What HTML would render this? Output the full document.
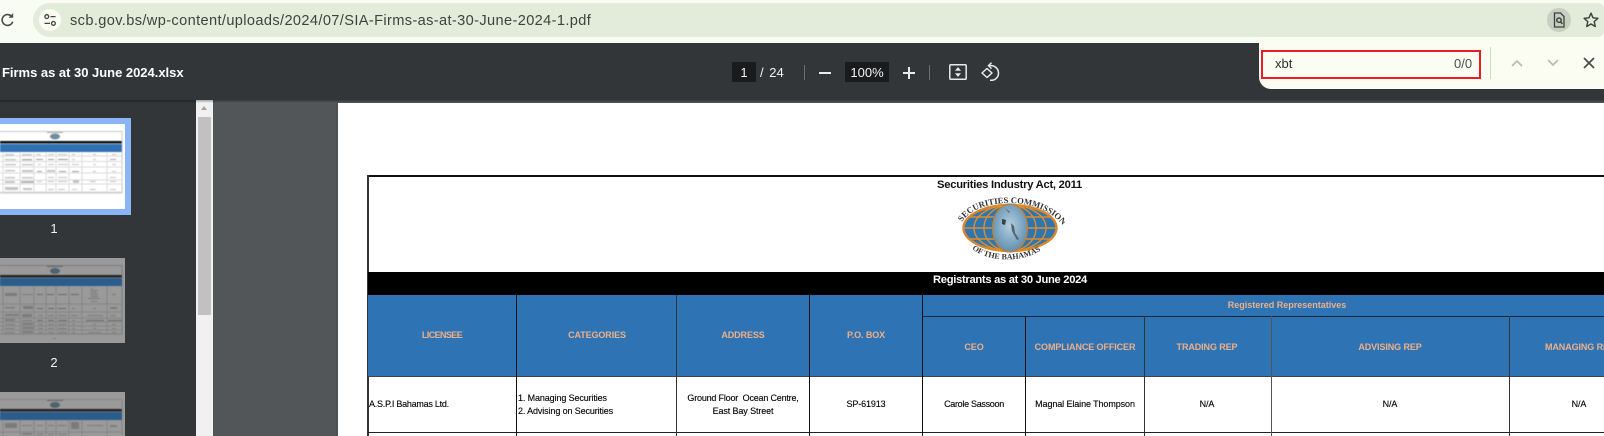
<!DOCTYPE html>
<html><head><meta charset="utf-8"><title>SIA Firms</title>
<style>
*{box-sizing:border-box}
html,body{margin:0;padding:0}
body{width:1604px;height:436px;position:relative;overflow:hidden;background:#525659;font-family:"Liberation Sans",sans-serif}
.a{position:absolute}
.t{position:absolute;white-space:nowrap}
.c{transform:translateX(-50%)}
.p{font-weight:400;color:#000;font-size:9px;line-height:11px;letter-spacing:-.12px;filter:blur(.2px);-webkit-text-stroke:.12px #000}
.h{font-weight:700;color:#eeaf87;font-size:9px;line-height:11px;letter-spacing:-.1px;filter:blur(.2px)}
.v{position:absolute;width:1px;background:#111}
</style></head><body>
<!-- top chrome -->
<div class="a" style="left:0;top:0;width:1604px;height:43px;background:#f9fcf2"></div>
<div class="a" style="left:33px;top:3px;width:1571px;height:34px;background:#e3ebdb;border-radius:17px 6px 6px 17px"></div>
<svg class="a" style="left:0;top:8px" width="20" height="24" viewBox="0 0 20 24"><path d="M11.4 8.2A5.4 5.4 0 1 0 12.7 13.6" fill="none" stroke="#474c47" stroke-width="1.6"/><path d="M13.2 5V9.8H8.6Z" fill="#474c47"/></svg>
<div class="a" style="left:39px;top:9px;width:22px;height:22px;border-radius:50%;background:#fafcf4"></div>
<svg class="a" style="left:39px;top:9px" width="22" height="22" viewBox="0 0 22 22" fill="none" stroke="#3f443f" stroke-width="1.3"><circle cx="7.8" cy="7.6" r="1.9"/><path d="M11.5 7.6H16.5M5.5 14.4H11"/><circle cx="14.4" cy="14.4" r="1.9"/></svg>
<div class="t" id="url" style="left:70px;top:12px;font-size:14.6px;line-height:18px;color:#3d443d;letter-spacing:.37px">scb.gov.bs/wp-content/uploads/2024/07/SIA-Firms-as-at-30-June-2024-1.pdf</div>
<div class="a" style="left:1547px;top:8px;width:24px;height:24px;border-radius:50%;background:#c8cfc2"></div>
<svg class="a" style="left:1547px;top:8px" width="24" height="24" viewBox="0 0 24 24" fill="none" stroke="#3b403b" stroke-width="1.3"><path d="M7.5 5H13.5L17 8.5V19H7.5Z"/><circle cx="12" cy="12.2" r="2.2" stroke-width="1.5"/><path d="M13.7 14L15.4 15.8" stroke-width="1.5"/></svg>
<svg class="a" style="left:1582px;top:11px" width="18" height="18" viewBox="0 0 18 18"><path d="M9 2.2L11 6.8L15.9 7.3L12.2 10.6L13.3 15.5L9 13L4.7 15.5L5.8 10.6L2.1 7.3L7 6.8Z" fill="none" stroke="#3b403b" stroke-width="1.4" stroke-linejoin="round"/></svg>

<!-- pdf toolbar -->
<div class="a" style="left:0;top:43px;width:1604px;height:57px;background:#323639"></div>
<div class="t" id="fn" style="left:2px;top:65px;font-size:13px;line-height:16px;font-weight:700;color:#fff;letter-spacing:-.02px">Firms as at 30 June 2024.xlsx</div>
<div class="a" style="left:732px;top:62px;width:24px;height:20px;background:#191b1c"></div>
<div class="t c" style="left:744px;top:65px;font-size:13px;line-height:16px;color:#f1f3f4">1</div>
<div class="t" style="left:760px;top:65px;font-size:13px;line-height:16px;color:#f1f3f4;word-spacing:2px">/ 24</div>
<div class="a" style="left:804px;top:65px;width:1px;height:15px;background:#6a6e71"></div>
<div class="a" style="left:819px;top:72px;width:12px;height:2px;background:#e8eaed"></div>
<div class="a" style="left:845px;top:62px;width:44px;height:20px;background:#191b1c"></div>
<div class="t c" style="left:867px;top:65px;font-size:13px;line-height:16px;color:#f1f3f4">100%</div>
<div class="a" style="left:903px;top:72px;width:12px;height:2px;background:#e8eaed"></div>
<div class="a" style="left:908px;top:67px;width:2px;height:12px;background:#e8eaed"></div>
<div class="a" style="left:929px;top:65px;width:1px;height:15px;background:#6a6e71"></div>
<svg class="a" style="left:947px;top:62px" width="22" height="20" viewBox="0 0 22 20" fill="none" stroke="#e8eaed" stroke-width="1.5"><rect x="2.8" y="2.8" width="16.4" height="14.4" rx="1"/><path d="M8 8.8L11 5L14 8.8Z M8 11.2L11 15L14 11.2Z" fill="#e8eaed" stroke="none"/></svg>
<svg class="a" style="left:979px;top:61px" width="23" height="22" viewBox="0 0 23 22" fill="none" stroke="#e8eaed" stroke-width="1.5"><path d="M8 7.5L3 12L8 16.5L13 12Z" stroke-linejoin="round"/><path d="M10 4.6C15.5 4 19.5 7.5 19.5 12C19.5 16.5 15.8 19.8 11 19.2"/><path d="M12.5 1.6L9.5 4.6L12.5 7.6"/></svg>

<!-- sidebar -->
<div class="a" style="left:0;top:100px;width:196px;height:336px;background:#323639"></div>
<div class="a" style="left:196px;top:100px;width:17px;height:336px;background:#f1f1f1"></div>
<div class="a" style="left:198px;top:117px;width:13px;height:198px;background:#c1c1c1"></div>
<div class="a" style="left:201px;top:106px;width:0;height:0;border-left:3.5px solid transparent;border-right:3.5px solid transparent;border-bottom:4px solid #a3a3a3"></div>
<div class="a" style="left:0;top:118px;width:131px;height:97px;background:#8ab4f8"></div>

<svg class="a" style="left:0;top:124px" width="125" height="85" viewBox="0 0 125 85">
<defs><filter id="b" x="-5%" y="-5%" width="110%" height="110%"><feGaussianBlur stdDeviation=".6"/></filter></defs>
<rect width="125" height="85" fill="#fff"/>
<g filter="url(#b)">
<path d="M0 7.5H122V69H0" fill="none" stroke="#c8c8c8"/>
<ellipse cx="55" cy="12.5" rx="5" ry="3" fill="#6f8d9e"/><rect x="47" y="8" width="16" height="1" fill="#aaa"/>
<rect x="0" y="17" width="122" height="2.5" fill="#111"/>
<rect x="0" y="20" width="122" height="8" fill="#2e72b4"/>
<path d="M3 28V69M20 28V69M34 28V69M46 28V69M56 28V69M69 28V69M82 28V69M107 28V69" stroke="#dcdcdc" fill="none"/>
<path d="M0 33H122M0 38.5H122M0 44H122M0 50H122M0 57H122M0 61H122M0 69H122" stroke="#dcdcdc" fill="none" transform="translate(0 -1)"/>
<g fill="#b0b0b0" opacity=".75"><rect x="5" y="30" width="9" height="1.4"/><rect x="22" y="30" width="10" height="1.4"/><rect x="36" y="30" width="5" height="1"/><rect x="48" y="30" width="6" height="1"/><rect x="58" y="30" width="9" height="1"/><rect x="72" y="30" width="3" height="1"/><rect x="93" y="30" width="3" height="1"/><rect x="112" y="30" width="4" height="1"/>
<rect x="5" y="35" width="11" height="1.4"/><rect x="22" y="35" width="10" height="1.4" fill="#888"/><rect x="36" y="35" width="7" height="1" fill="#777"/><rect x="48" y="35" width="6" height="1" fill="#777"/><rect x="58" y="35" width="10" height="1" fill="#777"/><rect x="72" y="35" width="3" height="1"/><rect x="93" y="35" width="3" height="1"/><rect x="110" y="35" width="6" height="1" fill="#888"/>
<rect x="5" y="40" width="11" height="1.4"/><rect x="22" y="40" width="11" height="1.4"/><rect x="38" y="40" width="3" height="1"/><rect x="48" y="40" width="6" height="1"/><rect x="58" y="40" width="10" height="1"/><rect x="72" y="40" width="7" height="1"/><rect x="93" y="40" width="3" height="1"/><rect x="112" y="40" width="4" height="1"/>
<rect x="5" y="46" width="10" height="1.4"/><rect x="22" y="46" width="11" height="2"/><rect x="37" y="47" width="5" height="1" fill="#777"/><rect x="47" y="46" width="8" height="2"/><rect x="59" y="47" width="7" height="1" fill="#777"/><rect x="72" y="47" width="7" height="1" fill="#777"/><rect x="93" y="47" width="3" height="1"/><rect x="112" y="47" width="4" height="1"/>
<rect x="5" y="53" width="10" height="1.4"/><rect x="22" y="53" width="11" height="1.4"/><rect x="48" y="53" width="6" height="1"/><rect x="58" y="53" width="9" height="1"/><rect x="110" y="53" width="6" height="1"/>
<rect x="5" y="57" width="10" height="2"/><rect x="21" y="57" width="13" height="2" fill="#999"/><rect x="37" y="57" width="5" height="1"/><rect x="48" y="57" width="6" height="1"/><rect x="58" y="57" width="9" height="1"/><rect x="73" y="56" width="6" height="3"/><rect x="90" y="57" width="6" height="1"/><rect x="110" y="57" width="6" height="1"/>
<rect x="5" y="63" width="13" height="3"/><rect x="23" y="64" width="9" height="2"/><rect x="48" y="65" width="6" height="1"/><rect x="58" y="65" width="7" height="1"/><rect x="72" y="65" width="5" height="1"/><rect x="90" y="65" width="6" height="1"/><rect x="110" y="65" width="6" height="1"/></g>
</g></svg>
<div class="t c" style="left:54px;top:221px;font-size:13px;line-height:16px;color:#f1f3f4">1</div>

<svg class="a" style="left:0;top:258px" width="125" height="85" viewBox="0 0 125 85">
<rect width="125" height="85" fill="#9a9a9a"/>
<g filter="url(#b)">
<path d="M0 7.5H122V76H0" fill="none" stroke="#7c7c7c"/>
<ellipse cx="55" cy="13" rx="5" ry="3" fill="#4f626e"/><rect x="47" y="8" width="16" height="1" fill="#666"/>
<rect x="0" y="17" width="122" height="2.5" fill="#222"/>
<rect x="0" y="20" width="122" height="8" fill="#2b5c8c"/>
<path d="M3 28V76M20 28V76M34 28V76M46 28V76M56 28V76M69 28V76M82 28V76M107 28V76" stroke="#858585" fill="none"/>
<path d="M0 46H122M0 54H122M0 60H122M0 64H122M0 68H122M0 72H122" stroke="#858585" fill="none"/>
<g fill="#6e6e6e" opacity=".7"><rect x="5" y="35" width="12" height="3"/><rect x="22" y="36" width="11" height="1"/><rect x="37" y="36" width="6" height="1" fill="#555"/><rect x="47" y="36" width="7" height="1" fill="#555"/><rect x="58" y="36" width="9" height="1" fill="#555"/><rect x="71" y="36" width="8" height="1" fill="#555"/><rect x="91" y="30" width="2" height="1"/><rect x="90" y="32" width="8" height="1"/><rect x="91" y="34" width="6" height="1"/><rect x="90" y="36" width="8" height="1"/><rect x="91" y="38" width="7" height="1"/><rect x="88" y="40" width="12" height="1"/><rect x="91" y="43" width="6" height="1"/><rect x="112" y="36" width="4" height="1"/>
<rect x="5" y="49" width="10" height="1.4"/><rect x="23" y="48" width="10" height="3"/><rect x="37" y="50" width="6" height="1" fill="#555"/><rect x="48" y="50" width="6" height="1" fill="#555"/><rect x="58" y="50" width="8" height="1" fill="#555"/><rect x="72" y="50" width="3" height="1"/><rect x="93" y="50" width="3" height="1"/><rect x="110" y="49" width="7" height="2"/>
<rect x="5" y="56" width="14" height="2"/><rect x="22" y="56" width="10" height="3"/><rect x="38" y="57" width="5" height="1"/><rect x="48" y="57" width="6" height="1"/><rect x="58" y="57" width="9" height="1"/><rect x="71" y="57" width="7" height="1"/><rect x="87" y="57" width="16" height="1"/><rect x="110" y="57" width="6" height="1"/>
<rect x="5" y="61" width="10" height="2"/><rect x="22" y="62" width="10" height="1"/><rect x="37" y="62" width="6" height="1" fill="#555"/><rect x="48" y="62" width="6" height="1" fill="#555"/><rect x="58" y="62" width="9" height="1" fill="#555"/><rect x="72" y="62" width="3" height="1"/><rect x="86" y="62" width="18" height="1" fill="#555"/><rect x="108" y="62" width="14" height="1" fill="#555"/>
<rect x="5" y="66" width="10" height="1"/><rect x="22" y="65" width="11" height="2"/><rect x="38" y="66" width="5" height="1"/><rect x="48" y="66" width="6" height="1"/><rect x="58" y="66" width="9" height="1"/><rect x="72" y="66" width="3" height="1"/><rect x="93" y="66" width="3" height="1"/><rect x="112" y="66" width="4" height="1"/>
<rect x="5" y="70" width="10" height="1"/><rect x="22" y="69" width="12" height="2"/><rect x="38" y="70" width="5" height="1"/><rect x="48" y="70" width="6" height="1"/><rect x="58" y="70" width="9" height="1"/><rect x="72" y="70" width="3" height="1"/><rect x="93" y="70" width="3" height="1"/><rect x="112" y="70" width="4" height="1"/>
<rect x="5" y="74" width="10" height="1"/><rect x="22" y="73" width="11" height="2"/><rect x="38" y="74" width="5" height="1"/><rect x="48" y="74" width="6" height="1"/><rect x="58" y="74" width="9" height="1"/><rect x="72" y="74" width="3" height="1"/><rect x="88" y="74" width="14" height="1"/><rect x="112" y="74" width="4" height="1"/><rect x="53" y="80" width="3" height="1"/></g>
</g></svg>
<div class="t c" style="left:54px;top:355px;font-size:13px;line-height:16px;color:#f1f3f4">2</div>

<svg class="a" style="left:0;top:392px" width="125" height="44" viewBox="0 0 125 44">
<rect width="125" height="44" fill="#9a9a9a"/>
<g filter="url(#b)">
<path d="M0 7.5H122V44M3 28V44M20 28V44M34 28V44M46 28V44M56 28V44M69 28V44M82 28V44M107 28V44" stroke="#858585" fill="none"/>
<ellipse cx="55" cy="13" rx="5" ry="3" fill="#4f626e"/><rect x="47" y="8" width="16" height="1" fill="#666"/>
<rect x="0" y="17" width="122" height="2.5" fill="#222"/>
<rect x="0" y="20" width="122" height="8" fill="#2b5c8c"/>
<path d="M0 40H122" stroke="#858585"/>
<g fill="#6e6e6e" opacity=".7"><rect x="5" y="31" width="12" height="5"/><rect x="22" y="33" width="10" height="1"/><rect x="37" y="33" width="6" height="1"/><rect x="48" y="33" width="6" height="1"/><rect x="58" y="33" width="9" height="1"/><rect x="71" y="30" width="8" height="7"/><rect x="87" y="33" width="16" height="1"/><rect x="110" y="33" width="7" height="2"/><rect x="22" y="41" width="10" height="2"/><rect x="37" y="42" width="6" height="1"/><rect x="48" y="42" width="6" height="1"/><rect x="58" y="42" width="9" height="1"/></g>
</g></svg>

<!-- top shadow under toolbar -->
<div class="a" style="left:0;top:100px;width:1604px;height:3px;background:linear-gradient(#00000055,#00000000);z-index:2"></div>

<!-- pdf page -->
<div class="a" style="left:338px;top:103px;width:1266px;height:333px;background:#fff"></div>
<div class="a" style="left:336px;top:103px;width:2px;height:333px;background:#4c5053"></div>

<!-- table -->
<div class="a" style="left:367px;top:175px;width:1237px;height:2px;background:#111"></div>
<div class="a" style="left:367px;top:175px;width:1.5px;height:261px;background:#333"></div>
<div class="a" style="left:368px;top:272px;width:1236px;height:23px;background:#000"></div>
<div class="a" style="left:368px;top:295px;width:1236px;height:81px;background:#2e74b5"></div>
<div class="a" style="left:922px;top:316px;width:682px;height:1px;background:#10243a"></div>
<div class="a" style="left:368px;top:376px;width:1236px;height:1px;background:#444"></div>
<div class="a" style="left:368px;top:432px;width:1236px;height:1px;background:#222"></div>
<div class="v" style="left:516px;top:295px;height:141px"></div>
<div class="v" style="left:676px;top:295px;height:141px;width:1px;background:#333"></div>
<div class="v" style="left:809px;top:295px;height:141px"></div>
<div class="v" style="left:922px;top:295px;height:141px"></div>
<div class="v" style="left:1025px;top:316px;height:120px"></div>
<div class="v" style="left:1144px;top:316px;height:120px;background:#333"></div>
<div class="v" style="left:1271px;top:316px;height:120px;width:1px;background:#555"></div>
<div class="v" style="left:1509px;top:316px;height:120px;background:#333"></div>

<div class="t c" style="left:1009.5px;top:178px;font-size:11.2px;line-height:14px;font-weight:700;color:#111;letter-spacing:-.24px;filter:blur(.2px)">Securities Industry Act, 2011</div>
<div class="t c" style="left:1010px;top:273px;font-size:11.2px;line-height:14px;font-weight:700;color:#fff;letter-spacing:-.3px;filter:blur(.2px)">Registrants as at 30 June 2024</div>

<svg class="a" style="left:955px;top:195px;filter:blur(.3px)" width="110" height="70" viewBox="0 0 110 70">
<defs>
<radialGradient id="g" cx=".5" cy=".45" r=".6"><stop offset="0" stop-color="#b4cfe0"/><stop offset="1" stop-color="#5a8aac"/></radialGradient>
<path id="arcT" d="M7 27C22 2 86 0 108 31"/>
<path id="arcB" d="M17 54C36 69 74 68 93 50"/>
</defs>
<ellipse cx="55" cy="33" rx="46.5" ry="23" fill="#2e76ad" stroke="#d9862b" stroke-width="2.4"/>
<g fill="none" stroke="#dd8c2e" stroke-width="1.4">
<path d="M9 33H101"/><path d="M14 22H96M14 44H96"/>
<ellipse cx="55" cy="33" rx="36" ry="23"/><ellipse cx="55" cy="33" rx="26" ry="23"/>
</g>
<ellipse cx="55" cy="33" rx="17.5" ry="24" fill="url(#g)" stroke="#c87d28" stroke-width="1.2"/>
<path d="M47 24L51 25L50 30L47 29Z" fill="#3b3f44"/>
<path d="M50 13L55 17L54 18ZM56 28L59 31L60 38L64 44L62 45L57 36Z" fill="#55606a"/>
<text font-family="Liberation Serif,serif" font-size="8.6" font-weight="700" fill="#333"><textPath href="#arcT">SECURITIES COMMISSION</textPath></text>
<text font-family="Liberation Serif,serif" font-size="8" font-weight="700" fill="#333"><textPath href="#arcB">OF THE BAHAMAS</textPath></text>
</svg>

<div class="t c h" style="left:1287px;top:300px;letter-spacing:0">Registered Representatives</div>
<div class="t c h" style="left:442px;top:330px;letter-spacing:-.6px">LICENSEE</div>
<div class="t c h" style="left:597px;top:330px">CATEGORIES</div>
<div class="t c h" style="left:743px;top:330px">ADDRESS</div>
<div class="t c h" style="left:866px;top:330px">P.O. BOX</div>
<div class="t c h" style="left:974px;top:342px">CEO</div>
<div class="t c h" style="left:1085px;top:342px">COMPLIANCE OFFICER</div>
<div class="t c h" style="left:1207px;top:342px">TRADING REP</div>
<div class="t c h" style="left:1390px;top:342px">ADVISING REP</div>
<div class="t h" style="left:1545px;top:342px">MANAGING REP</div>

<div class="t p" style="left:369px;top:399px;letter-spacing:-.25px">A.S.P.I Bahamas Ltd.</div>
<div class="t p" style="left:518px;top:393px">1. Managing Securities</div>
<div class="t p" style="left:518px;top:406px">2. Advising on Securities</div>
<div class="t c p" style="left:743px;top:393px;letter-spacing:-.2px">Ground Floor&nbsp; Ocean Centre,</div>
<div class="t c p" style="left:743px;top:406px">East Bay Street</div>
<div class="t c p" style="left:866px;top:399px">SP-61913</div>
<div class="t c p" style="left:974px;top:399px;letter-spacing:-.3px">Carole Sassoon</div>
<div class="t c p" style="left:1085px;top:399px;letter-spacing:-.1px">Magnal Elaine Thompson</div>
<div class="t c p" style="left:1207px;top:399px">N/A</div>
<div class="t c p" style="left:1390px;top:399px">N/A</div>
<div class="t c p" style="left:1579px;top:399px">N/A</div>

<!-- find bar -->
<div class="a" style="left:1259px;top:37px;width:345px;height:52px;background:#fbfdf3;border-radius:0 0 0 12px;z-index:5"></div>
<div class="a" style="left:1261px;top:50px;width:220px;height:29px;border:2px solid #ed1c24;z-index:6"></div>
<div class="t" style="left:1275px;top:55px;font-size:13px;line-height:18px;color:#2b2f2b;z-index:6">xbt</div>
<div class="t" style="left:1454px;top:55px;font-size:13px;line-height:18px;color:#4a4f4a;z-index:6">0/0</div>
<div class="a" style="left:1490px;top:47px;width:1px;height:32px;background:#bfe6b0;z-index:6"></div>
<svg class="a" style="left:1510px;top:57px;z-index:6" width="14" height="12" viewBox="0 0 14 12"><path d="M2 9L7 4L12 9" fill="none" stroke="#b6bab2" stroke-width="1.6"/></svg>
<svg class="a" style="left:1546px;top:57px;z-index:6" width="14" height="12" viewBox="0 0 14 12"><path d="M2 3L7 8L12 3" fill="none" stroke="#b6bab2" stroke-width="1.6"/></svg>
<svg class="a" style="left:1582px;top:56px;z-index:6" width="14" height="14" viewBox="0 0 14 14"><path d="M2 2L12 12M12 2L2 12" fill="none" stroke="#474c47" stroke-width="1.7"/></svg>
</body></html>
